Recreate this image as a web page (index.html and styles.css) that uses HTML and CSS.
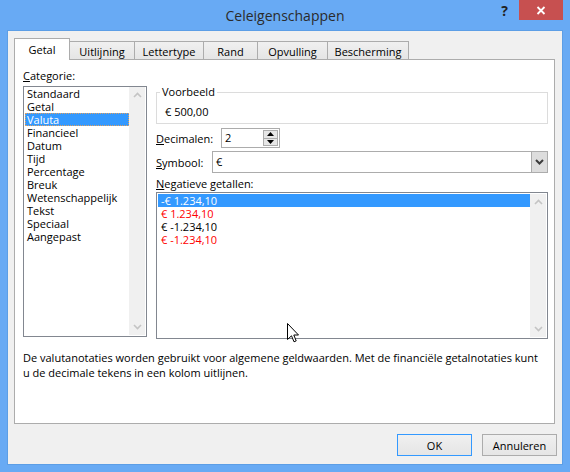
FILE: index.html
```html
<!DOCTYPE html>
<html>
<head>
    <title>Celeigenschappen</title>
    <link rel="stylesheet" href="styles.css">
</head>
<body>
    <div class="window">
        <div class="title-bar">
            <span class="title-spacer"></span>
            <span class="title">Celeigenschappen</span>
            <span class="help-btn">?</span>
            <span class="close-btn">
                <svg width="10" height="9" viewBox="0 0 10 9"><path d="M1.5 1 L8.5 8 M8.5 1 L1.5 8" stroke="#fff" stroke-width="1.8" fill="none"/></svg>
            </span>
        </div>

        <div class="client">
            <div class="tabs">
                <div class="tab active" style="width:56px">Getal</div>
                <div class="tab" style="width:66px">Uitlijning</div>
                <div class="tab" style="width:70px">Lettertype</div>
                <div class="tab" style="width:55px">Rand</div>
                <div class="tab" style="width:71px">Opvulling</div>
                <div class="tab" style="width:82px">Bescherming</div>
            </div>

            <div class="tab-panel">
                <div class="columns">
                    <!-- Categories -->
                    <div class="left-col">
                        <div class="label"><u>C</u>ategorie:</div>
                        <div class="listbox category-list">
                            <div class="list-items">
                                <div class="item">Standaard</div>
                                <div class="item">Getal</div>
                                <div class="item selected">Valuta</div>
                                <div class="item">Financieel</div>
                                <div class="item">Datum</div>
                                <div class="item">Tijd</div>
                                <div class="item">Percentage</div>
                                <div class="item">Breuk</div>
                                <div class="item">Wetenschappelijk</div>
                                <div class="item">Tekst</div>
                                <div class="item">Speciaal</div>
                                <div class="item">Aangepast</div>
                            </div>
                            <div class="scrollbar">
                                <span class="arrow"><svg width="9" height="6" viewBox="0 0 9 6"><path d="M1 5 L4.5 1.5 L8 5" stroke="#c4c4c4" stroke-width="1.6" fill="none"/></svg></span>
                                <span class="arrow"><svg width="9" height="6" viewBox="0 0 9 6"><path d="M1 1 L4.5 4.5 L8 1" stroke="#c4c4c4" stroke-width="1.6" fill="none"/></svg></span>
                            </div>
                        </div>
                    </div>

                    <!-- Format options -->
                    <div class="right-col">
                        <fieldset class="sample">
                            <legend>Voorbeeld</legend>
                            <div>€ 500,00</div>
                        </fieldset>

                        <div class="field-row decimals-row">
                            <span class="field-label decimals-label"><u>D</u>ecimalen:</span>
                            <div class="spinner">
                                <span class="spin-value">2</span>
                                <div class="spin-buttons">
                                    <span class="spin-btn"><svg width="7" height="4" viewBox="0 0 7 4"><path d="M0 4 L3.5 0 L7 4 Z" fill="#000"/></svg></span>
                                    <span class="spin-btn"><svg width="7" height="4" viewBox="0 0 7 4"><path d="M0 0 L3.5 4 L7 0 Z" fill="#000"/></svg></span>
                                </div>
                            </div>
                        </div>

                        <div class="field-row symbol-row">
                            <span class="field-label symbol-label"><u>S</u>ymbool:</span>
                            <div class="dropdown">
                                <span class="dropdown-value">€</span>
                                <span class="dropdown-btn"><svg width="9" height="6" viewBox="0 0 9 6"><path d="M1 1 L4.5 4.5 L8 1" stroke="#3c3c3c" stroke-width="2" fill="none"/></svg></span>
                            </div>
                        </div>

                        <div class="label negative-label"><u>N</u>egatieve getallen:</div>
                        <div class="listbox negative-list">
                            <div class="list-items">
                                <div class="item selected">-€ 1.234,10</div>
                                <div class="item red">€ 1.234,10</div>
                                <div class="item">€ -1.234,10</div>
                                <div class="item red">€ -1.234,10</div>
                            </div>
                            <div class="scrollbar">
                                <span class="arrow"><svg width="9" height="6" viewBox="0 0 9 6"><path d="M1 5 L4.5 1.5 L8 5" stroke="#c4c4c4" stroke-width="1.6" fill="none"/></svg></span>
                                <span class="arrow"><svg width="9" height="6" viewBox="0 0 9 6"><path d="M1 1 L4.5 4.5 L8 1" stroke="#c4c4c4" stroke-width="1.6" fill="none"/></svg></span>
                            </div>
                        </div>
                    </div>
                </div>

                <p class="description">De valutanotaties worden gebruikt voor algemene geldwaarden. Met de financiële getalnotaties kunt<br>u de decimale tekens in een kolom uitlijnen.</p>
            </div>

            <div class="dialog-buttons">
                <button class="dlg-btn default">OK</button>
                <button class="dlg-btn">Annuleren</button>
            </div>
        </div>
    </div>

    <svg class="cursor" width="13" height="20" viewBox="0 0 13 20"><path d="M0.5 0.5 V16.5 L4.5 12.8 L7 18.8 L9.2 17.9 L6.8 12 H11.5 Z" fill="#fff" stroke="#000" stroke-width="1"/></svg>
</body>
</html>
```

FILE: styles.css
```css
* {
    box-sizing: border-box;
}

body {
    margin: 0;
    background: #68aaf4;
    font-family: 'Segoe UI', 'Open Sans', sans-serif;
    font-size: 11px;
    color: #000;
}

.window {
    width: 570px;
    height: 472px;
    display: flex;
    flex-direction: column;
    background: #68aaf4;
}

/* Title bar */
.title-bar {
    display: flex;
    height: 30px;
    flex-shrink: 0;
}

.title-spacer {
    width: 75px;
}

.title {
    flex: 1;
    text-align: center;
    line-height: 31px;
    font-size: 14px;
    color: #2b2b2b;
}

.help-btn {
    width: 19px;
    margin-right: 5px;
    height: 22px;
    line-height: 22px;
    text-align: center;
    font-weight: bold;
    font-size: 14px;
    color: #222;
}

.close-btn {
    width: 44px;
    height: 20px;
    margin-right: 7px;
    background: #c75050;
    display: flex;
    align-items: center;
    justify-content: center;
}

/* Client area */
.client {
    flex: 1;
    margin: 0 7px 7px;
    background: #f0f0f0;
    border: 1px solid #5c9ee6;
    padding: 7px 5px 0 6px;
    display: flex;
    flex-direction: column;
}

.tabs {
    display: flex;
    align-items: flex-end;
    height: 21px;
}

.tab {
    height: 18px;
    line-height: 17px;
    padding-top: 1px;
    text-align: center;
    border: 1px solid #acacac;
    border-bottom: none;
    background: linear-gradient(#f0f0f0, #e5e5e5);
    margin-left: -1px;
}

.tab.active {
    height: 22px;
    margin-left: 0;
    margin-bottom: -1px;
    padding-top: 2px;
    background: #fff;
    position: relative;
    z-index: 2;
}

.tab-panel {
    width: 541px;
    height: 365px;
    border: 1px solid #acacac;
    background: #fff;
    padding: 8px 5px 0 8px;
}

.columns {
    display: flex;
    gap: 9px;
}

.left-col {
    width: 124px;
}

.right-col {
    width: 392px;
    padding-top: 16px;
}

.label {
    line-height: 15px;
}

/* List boxes */
.listbox {
    display: flex;
    border: 1px solid #828790;
    background: #fff;
}

.category-list {
    height: 251px;
    margin-top: 3px;
    padding: 0 1px 1px 1px;
}

.negative-list {
    height: 147px;
    margin-top: 1px;
    padding: 1px;
}

.list-items {
    flex: 1;
}

.item {
    height: 13px;
    line-height: 13px;
    padding-left: 2px;
    white-space: nowrap;
}

.negative-list .item {
    padding-left: 3px;
}

.item.selected {
    background: #3399ff;
    color: #fff;
}

.category-list .item.selected {
    outline: 1px dotted #e0a060;
    outline-offset: -1px;
}

.item.red {
    color: #ff0000;
}

.scrollbar {
    width: 16px;
    background: #f0f0f0;
    display: flex;
    flex-direction: column;
    justify-content: space-between;
}

.arrow {
    height: 16px;
    display: flex;
    align-items: center;
    justify-content: center;
}

/* Sample group */
.sample {
    margin: 0;
    padding: 4px 4px 4px 8px;
    border: 1px solid #dcdcdc;
    line-height: 15px;
}

.sample legend {
    padding: 0 2px;
    margin-left: -5px;
    line-height: 16px;
}

/* Fields */
.field-row {
    display: flex;
    align-items: center;
}

.decimals-row {
    margin-top: 4px;
    height: 20px;
}

.symbol-row {
    margin-top: 3px;
    height: 22px;
}

.decimals-label {
    width: 65px;
}

.symbol-label {
    width: 56px;
}

.spinner {
    width: 59px;
    height: 20px;
    border: 1px solid #acacac;
    background: #fff;
    display: flex;
}

.spin-value {
    flex: 1;
    padding-left: 3px;
    line-height: 17px;
}

.spin-buttons {
    width: 15px;
    margin: 1px;
    display: flex;
    flex-direction: column;
    border: 1px solid #acacac;
}

.spin-btn {
    flex: 1;
    background: #e6e6e6;
    display: flex;
    align-items: center;
    justify-content: center;
}

.spin-btn + .spin-btn {
    border-top: 1px solid #acacac;
}

.dropdown {
    flex: 1;
    height: 22px;
    border: 1px solid #acacac;
    background: #fff;
    display: flex;
}

.dropdown-value {
    flex: 1;
    padding-left: 3px;
    line-height: 19px;
}

.dropdown-btn {
    width: 16px;
    background: #dddddd;
    border-left: 1px solid #acacac;
    display: flex;
    align-items: center;
    justify-content: center;
}

.negative-label {
    margin-top: 3px;
}

.description {
    margin: 11px 0 0;
    line-height: 15px;
    white-space: nowrap;
}

/* Bottom buttons */
.dialog-buttons {
    display: flex;
    justify-content: flex-end;
    gap: 10px;
    margin-top: 10px;
}

.dlg-btn {
    width: 75px;
    height: 22px;
    padding: 0;
    border: 1px solid #acacac;
    background: linear-gradient(#f0f0f0, #e5e5e5);
    font-family: inherit;
    font-size: 11px;
    color: #000;
}

.dlg-btn.default {
    border-color: #3399ff;
}

.cursor {
    position: absolute;
    left: 287px;
    top: 323px;
}
```
